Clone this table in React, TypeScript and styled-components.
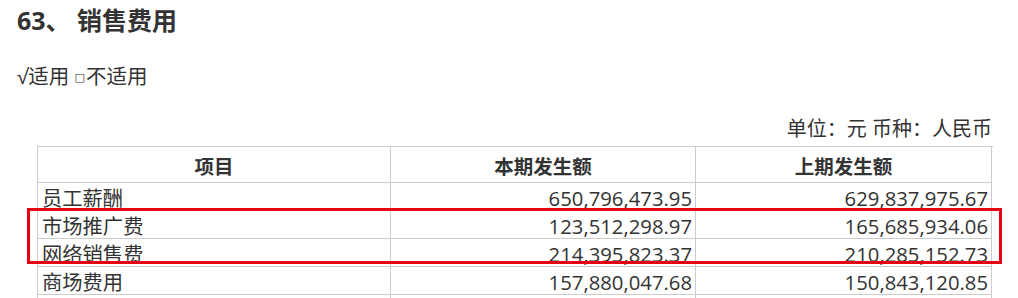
import React from "react";
import styled, { createGlobalStyle } from "styled-components";

const rows = [
  { name: "员工薪酬", cur: "650,796,473.95", prev: "629,837,975.67" },
  { name: "市场推广费", cur: "123,512,298.97", prev: "165,685,934.06" },
  { name: "网络销售费", cur: "214,395,823.37", prev: "210,285,152.73" },
  { name: "商场费用", cur: "157,880,047.68", prev: "150,843,120.85" },
  { name: "", cur: "", prev: "" },
];

const App = () => {
  return (
    <Page>
      <GlobalStyle />
      <Title>63、 销售费用</Title>
      <Check>
        √适用 <Box>□</Box>不适用
      </Check>
      <Unit>单位：元 币种：人民币</Unit>
      <Table>
        <Row $head>
          <Th>项目</Th>
          <Th>本期发生额</Th>
          <Th>上期发生额</Th>
        </Row>
        {rows.map((row, index) => (
          <Row key={index}>
            <Td>{row.name}</Td>
            <Td $num>{row.cur}</Td>
            <Td $num>{row.prev}</Td>
          </Row>
        ))}
        <Highlight />
      </Table>
    </Page>
  );
};

export default App;

const GlobalStyle = createGlobalStyle`
  body {
    margin: 0;
    background: #fff;
    font-family: "Open Sans", "Noto Sans CJK SC", sans-serif;
    color: #333;
  }
`;
const Page = styled.div`
  padding: 2px 0 0 17px;
  width: 1018px;
  height: 298px;
  overflow: hidden;
  box-sizing: border-box;
`;
const Title = styled.h2`
  margin: 0;
  font-size: 25px;
  line-height: 36px;
  font-weight: 700;
  color: #333;
`;
const Check = styled.div`
  margin-top: 24px;
  font-size: 20.5px;
  height: 28px;
  line-height: 28px;
  display: flex;
  align-items: center;
  white-space: pre;
`;
const Box = styled.span`
  font-family: "DejaVu Sans", sans-serif;
  font-size: 11px;
  line-height: 1;
  margin: 3px 1px 0 0;
`;
const Unit = styled.div`
  margin-top: 25px;
  width: 975px;
  text-align: right;
  font-size: 20px;
  line-height: 28px;
`;
const Table = styled.div`
  position: relative;
  margin: 3px 0 0 20px;
  width: 955px;
  border-top: 1px solid #ccc;
  border-left: 1px solid #ccc;
  color: #333;
`;
const Row = styled.div<{ $head?: boolean }>`
  display: grid;
  grid-template-columns: 353px 305px 296px;
  height: ${(p) => (p.$head ? "36px" : "28px")};
`;
const Th = styled.div`
  display: flex;
  align-items: center;
  justify-content: center;
  border-right: 1px solid #ccc;
  border-bottom: 1px solid #ccc;
  font-weight: 700;
  font-size: 19.5px;
  padding-top: 1px;
`;
const Td = styled.div<{ $num?: boolean }>`
  display: flex;
  align-items: center;
  justify-content: ${(p) => (p.$num ? "flex-end" : "flex-start")};
  padding: 2px 3px 0 4px;
  border-right: 1px solid #ccc;
  border-bottom: 1px solid #ccc;
  font-size: 20.3px;
  white-space: nowrap;
  line-height: 24px;
`;
const Highlight = styled.div`
  position: absolute;
  left: -11px;
  top: 61px;
  width: 975px;
  height: 56px;
  border: 3px solid #e60012;
  box-sizing: border-box;
  pointer-events: none;
`;
